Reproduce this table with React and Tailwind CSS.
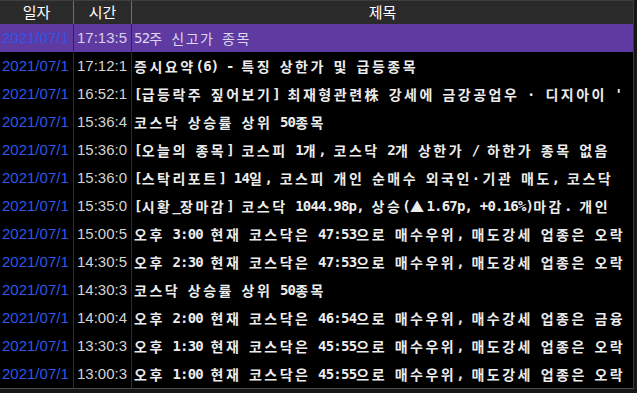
import React from "react";

const rows = [
  { date: "2021/07/1", time: "17:13:5", title: "52주 신고가 종목" },
  { date: "2021/07/1", time: "17:12:1", title: "증시요약(6) - 특징 상한가 및 급등종목" },
  { date: "2021/07/1", time: "16:52:1", title: "[급등락주 짚어보기] 최재형관련株 강세에 금강공업우 · 디지아이 '" },
  { date: "2021/07/1", time: "15:36:4", title: "코스닥 상승률 상위 50종목" },
  { date: "2021/07/1", time: "15:36:0", title: "[오늘의 종목] 코스피 1개, 코스닥 2개 상한가 / 하한가 종목 없음" },
  { date: "2021/07/1", time: "15:36:0", title: "[스탁리포트] 14일, 코스피 개인 순매수 외국인·기관 매도, 코스닥" },
  { date: "2021/07/1", time: "15:35:0", title: "[시황_장마감] 코스닥 1044.98p, 상승(▲1.67p, +0.16%)마감. 개인" },
  { date: "2021/07/1", time: "15:00:5", title: "오후 3:00 현재 코스닥은 47:53으로 매수우위, 매도강세 업종은 오락" },
  { date: "2021/07/1", time: "14:30:5", title: "오후 2:30 현재 코스닥은 47:53으로 매수우위, 매도강세 업종은 오락" },
  { date: "2021/07/1", time: "14:30:3", title: "코스닥 상승률 상위 50종목" },
  { date: "2021/07/1", time: "14:00:4", title: "오후 2:00 현재 코스닥은 46:54으로 매수우위, 매수강세 업종은 금융" },
  { date: "2021/07/1", time: "13:30:3", title: "오후 1:30 현재 코스닥은 45:55으로 매수우위, 매도강세 업종은 오락" },
  { date: "2021/07/1", time: "13:00:3", title: "오후 1:00 현재 코스닥은 45:55으로 매수우위, 매도강세 업종은 오락" },
];

// half-width ascii runs get a mono face, hangul runs get wider spacing (like GulimChe)
function Title({ text, sel }) {
  const parts = text.split(/([\x20-\x7e]+)/).filter(Boolean);
  return parts.map((p, i) =>
    /^[\x20-\x7e]+$/.test(p) ? (
      <span key={i} className="font-['DejaVu_Sans_Mono',monospace] text-[14px] tracking-[-0.8px]">
        {p}
      </span>
    ) : (
      <span
        key={i}
        className={`font-['Noto_Sans_CJK_KR',sans-serif] text-[14px] ${sel ? "tracking-[1.5px]" : "tracking-[2.5px]"}`}
      >
        {p}
      </span>
    )
  );
}

export default function App() {
  return (
    <div className="w-[637px] h-[393px] bg-[#161616] overflow-hidden">
      <div className="w-[634px] border-r border-[#3a3a3a] border-b border-b-[#4a4a4a] bg-black">
        {/* header */}
        <div className="flex h-[24px] bg-[#2a2a2a] border-t border-[#3e3e3e] text-white text-[15px] font-['Noto_Sans_CJK_KR',sans-serif]">
          <div className="w-[74px] border-r border-[#6e6e6e] flex items-center justify-center">일자</div>
          <div className="w-[58px] border-r border-[#6e6e6e] flex items-center justify-center">시간</div>
          <div className="flex-1 flex items-center justify-center">제목</div>
        </div>

        {/* list */}
        {rows.map((r, i) => {
          const sel = i === 0;
          return (
            <div
              key={i}
              className={`flex h-[28px] items-center ${sel ? "bg-[#5e3aa1]" : "bg-black"}`}
            >
              <div className="w-[74px] h-full border-r border-[#2c2c2c] flex items-center pl-[2px] overflow-hidden whitespace-nowrap text-[15px] text-[#2f56ea] font-['Liberation_Sans',Arial,sans-serif]">
                {r.date}
              </div>
              <div className={`w-[58px] h-full border-r border-[#2c2c2c] flex items-center pl-[3px] overflow-hidden whitespace-nowrap text-[15px] font-['Liberation_Sans',Arial,sans-serif] ${sel ? "text-[#d6d0ea]" : "text-[#d4d4d4]"}`}>
                {r.time}
              </div>
              <div
                className={`flex-1 h-full flex items-center pl-[2px] overflow-hidden whitespace-pre ${sel ? "text-[#ddd6ee] font-normal" : "text-[#ececec] font-bold"}`}
              >
                <Title text={r.title} sel={sel} />
              </div>
            </div>
          );
        })}
      </div>
    </div>
  );
}
